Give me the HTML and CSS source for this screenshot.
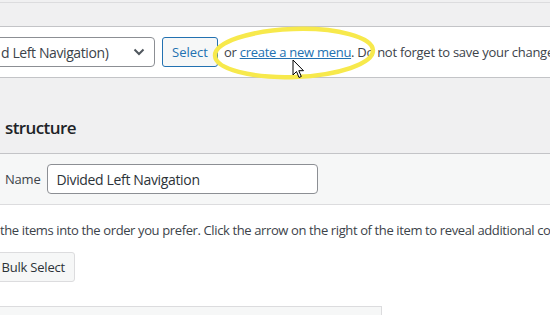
FILE: index.html
```html
<!DOCTYPE html>
<html lang="en">
<head>
  <meta charset="UTF-8">
  <meta name="viewport" content="width=device-width, initial-scale=1.0">
  <title>Menus</title>
  <link rel="stylesheet" href="styles.css">
</head>
<body>

  <div class="top-strip"></div>

  <div class="manage-menus">
    <div class="menu-select">
      <span>d Left Navigation)</span>
      <svg class="chevron" width="12" height="8" viewBox="0 0 12 8"><path d="M1.5 1.5 L6 6 L10.5 1.5" fill="none" stroke="#50575e" stroke-width="2"/></svg>
    </div>
    <button type="button" class="select-button">Select</button>
    <span class="hint">or <a href="#">create a new menu</a>. Do not forget to save your changes!</span>

    <svg class="highlight" width="172" height="62" viewBox="0 0 172 62">
      <ellipse cx="85" cy="31" rx="79" ry="24" fill="none" stroke="#f7e94c" stroke-width="4.5" transform="rotate(-2 85 31)"/>
    </svg>
    <svg class="cursor" width="14" height="22" viewBox="0 0 14 22">
      <path d="M1 1 L1 16 L4.5 12.5 L7 18.5 L9.3 17.5 L6.8 11.7 L11.5 11.7 Z" fill="#fff" stroke="#000" stroke-width="1" stroke-linejoin="round"/>
    </svg>
  </div>

  <div class="menu-header">
    <h2>structure</h2>
  </div>

  <div class="name-row">
    <label for="menu-name">Name</label>
    <input type="text" id="menu-name" value="Divided Left Navigation">
  </div>

  <div class="menu-body">
    <p class="drag-hint">the items into the order you prefer. Click the arrow on the right of the item to reveal additional configuration options.</p>
    <button type="button" class="bulk-button">Bulk Select</button>
    <div class="menu-list"></div>
  </div>

</body>
</html>
```

FILE: styles.css
```css
body {
  margin: 0;
  background-color: #f0f0f1;
  font-family: "Open Sans", Arial, sans-serif;
  font-size: 13px;
  color: #3c434a;
  overflow: hidden;
  height: 315px;
}
.top-strip {
  height: 2px;
  border-bottom: 1px solid #dcdcde;
}
.manage-menus {
  position: relative;
  margin-top: 23px;
  height: 30px;
  padding: 10px 0;
  background-color: #fff;
  border-top: 1px solid #c3c4c7;
  border-bottom: 1px solid #c3c4c7;
  display: flex;
  align-items: center;
  white-space: nowrap;
}
.menu-select {
  flex-shrink: 0;
  box-sizing: border-box;
  height: 30px;
  width: 165px;
  margin-left: -10px;
  padding-left: 10px;
  padding-right: 9px;
  border: 1px solid #8c8f94;
  border-radius: 4px;
  display: flex;
  align-items: center;
  justify-content: space-between;
  font-size: 14px;
  letter-spacing: -0.4px;
}
.select-button {
  flex-shrink: 0;
  box-sizing: border-box;
  height: 30px;
  width: 56px;
  margin-left: 7px;
  border: 1px solid #2271b1;
  border-radius: 3px;
  background-color: #f6f7f7;
  color: #2271b1;
  font-family: inherit;
  font-size: 13px;
  padding: 0;
}
.hint {
  flex-shrink: 0;
  margin-left: 6px;
  font-size: 13px;
  letter-spacing: -0.27px;
}
.hint a {
  color: #2271b1;
}
.highlight {
  position: absolute;
  left: 209px;
  top: -5px;
}
.cursor {
  position: absolute;
  left: 292px;
  top: 32px;
}
.menu-header {
  height: 75px;
  display: flex;
  align-items: flex-end;
}
.menu-header h2 {
  margin: 0 0 17px 5px;
  font-size: 17px;
  font-weight: 600;
  line-height: 1;
  letter-spacing: -0.6px;
  color: #1d2327;
}
.name-row {
  box-sizing: border-box;
  height: 52px;
  background-color: #f6f7f7;
  border-top: 1px solid #c3c4c7;
  border-bottom: 1px solid #dcdcde;
  display: flex;
  align-items: center;
}
.name-row label {
  margin-left: 5px;
  font-size: 13px;
  letter-spacing: -0.2px;
}
.name-row input {
  box-sizing: border-box;
  width: 271px;
  height: 30px;
  margin-left: 6px;
  padding: 0 9px;
  border: 1px solid #8c8f94;
  border-radius: 4px;
  font-family: inherit;
  font-size: 14px;
  letter-spacing: -0.35px;
  color: #2c3338;
}
.menu-body {
  background-color: #fff;
  height: 120px;
  overflow: hidden;
}
.drag-hint {
  margin: 16px 0 0 0;
  font-size: 13px;
  letter-spacing: -0.38px;
  white-space: nowrap;
}
.bulk-button {
  display: block;
  box-sizing: border-box;
  height: 30px;
  width: 80px;
  margin: 13px 0 0 -5px;
  border: 1px solid #dcdcde;
  border-radius: 3px;
  background-color: #f6f7f7;
  color: #2c3338;
  font-family: inherit;
  font-size: 13px;
  letter-spacing: -0.2px;
  text-align: right;
  padding: 0 9px 0 0;
}
.menu-list {
  width: 390px;
  height: 40px;
  margin: 24px 0 0 -10px;
  background-color: #f6f7f7;
  border: 1px solid #dcdcde;
}
```
